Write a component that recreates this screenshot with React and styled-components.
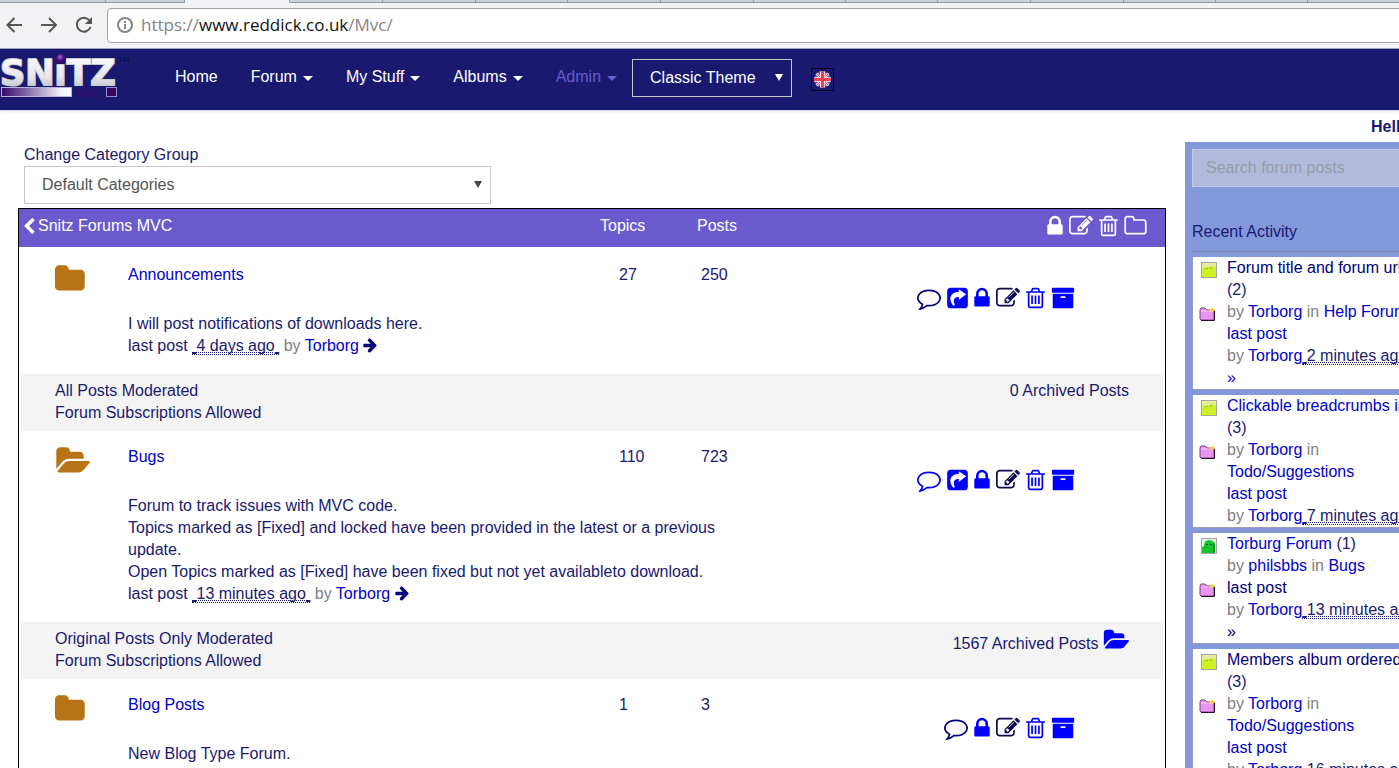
import React from "react";
import styled, { createGlobalStyle } from "styled-components";

const navy = "#191970";
const link = "#0000cd";
const visited = "#00007a";
const bright = "#0000ff";

const GlobalStyle = createGlobalStyle`
  *, *::before, *::after { box-sizing: border-box; }
  html { scrollbar-width: none; }
  body {
    margin: 0;
    background: #fff;
    color: ${navy};
    font: 16px/22px "Liberation Sans", Arial, sans-serif;
  }
`;

/* ---------- icons ---------- */

const Svg = styled.svg`
  display: inline-block;
  flex: none;
  fill: currentColor;
`;

const glyphs = {
  folder: {
    box: "64 0 1792 1792",
    d: "M1728 608v704q0 92-66 158t-158 66h-1216q-92 0-158-66t-66-158v-960q0-92 66-158t158-66h320q92 0 158 66t66 158v32h672q92 0 158 66t66 158z",
  },
  folderOpen: {
    box: "0 0 1943 1792",
    d: "M1943 952q0 31-31 66l-336 396q-43 51-120.5 86.5t-143.5 35.5h-1088q-34 0-60.5-13t-26.5-43q0-31 31-66l336-396q43-51 120.5-86.5t143.5-35.5h1088q34 0 60.5 13t26.5 43zm-343-344v160h-832q-94 0-197 47.5t-164 119.5l-337 396-5 6q0-4-.5-12.5t-.5-12.5v-960q0-92 66-158t158-66h320q92 0 158 66t66 158v32h544q92 0 158 66t66 158z",
  },
  folderOutline: {
    box: "64 0 1664 1792",
    d: "M1600 1312v-704q0-40-28-68t-68-28h-704q-40 0-68-28t-28-68v-64q0-40-28-68t-68-28h-320q-40 0-68 28t-28 68v960q0 40 28 68t68 28h1216q40 0 68-28t28-68zm128-704v704q0 92-66 158t-158 66h-1216q-92 0-158-66t-66-158v-960q0-92 66-158t158-66h320q92 0 158 66t66 158v32h672q92 0 158 66t66 158z",
  },
  lock: {
    box: "320 0 1152 1792",
    d: "M640 768h512v-192q0-106-75-181t-181-75-181 75-75 181v192zm832 96v576q0 40-28 68t-68 28h-960q-40 0-68-28t-28-68v-576q0-40 28-68t68-28h32v-192q0-184 132-316t316-132 316 132 132 316v192h32q40 0 68 28t28 68z",
  },
  edit: {
    box: "0 0 1792 1792",
    d: "M888 1184l116-116-152-152-116 116v56h96v96h56zm440-720q-16-16-33 1l-350 350q-17 17-1 33t33-1l350-350q17-17 1-33zm80 594v190q0 119-84.5 203.5t-203.5 84.5h-832q-119 0-203.5-84.5t-84.5-203.5v-832q0-119 84.5-203.5t203.5-84.5h832q63 0 117 25 15 7 18 23 3 17-9 29l-49 49q-14 14-32 8-23-6-45-6h-832q-66 0-113 47t-47 113v832q0 66 47 113t113 47h832q66 0 113-47t47-113v-126q0-13 9-22l64-64q15-15 35-7t20 29zm-96-738l288 288-672 672h-288v-288zm444 132l-92 92-288-288 92-92q28-28 68-28t68 28l152 152q28 28 28 68t-28 68z",
  },
  trash: {
    box: "192 0 1408 1792",
    d: "M704 736v576q0 14-9 23t-23 9h-64q-14 0-23-9t-9-23v-576q0-14 9-23t23-9h64q14 0 23 9t9 23zm256 0v576q0 14-9 23t-23 9h-64q-14 0-23-9t-9-23v-576q0-14 9-23t23-9h64q14 0 23 9t9 23zm256 0v576q0 14-9 23t-23 9h-64q-14 0-23-9t-9-23v-576q0-14 9-23t23-9h64q14 0 23 9t9 23zm128 724v-948h-896v948q0 22 7 40.5t14.5 27 10.5 8.5h832q3 0 10.5-8.5t14.5-27 7-40.5zm-672-1076h448l-48-117q-7-9-17-11h-317q-10 2-17 11zm928 32v64q0 14-9 23t-23 9h-96v948q0 83-47 143.5t-113 60.5h-832q-66 0-113-58.5t-47-141.5v-952h-96q-14 0-23-9t-9-23v-64q0-14 9-23t23-9h309l70-167q15-37 54-63t79-26h320q40 0 79 26t54 63l70 167h309q14 0 23 9t9 23z",
  },
  archive: {
    box: "0 0 1792 1792",
    d: "M1088 832q0-26-19-45t-45-19h-256q-26 0-45 19t-19 45 19 45 45 19h256q26 0 45-19t19-45zm576-192v960q0 26-19 45t-45 19h-1408q-26 0-45-19t-19-45v-960q0-26 19-45t45-19h1408q26 0 45 19t19 45zm64-448v256q0 26-19 45t-45 19h-1536q-26 0-45-19t-19-45v-256q0-26 19-45t45-19h1536q26 0 45 19t19 45z",
  },
  comment: {
    box: "0 0 1792 1792",
    d: "M896 384q-204 0-381.5 69.5t-282 187.5-104.5 255q0 112 71.5 213.5t201.5 175.5l87 50-27 96q-24 91-70 172 152-63 275-171l43-38 57 6q69 8 130 8 204 0 381.5-69.5t282-187.5 104.5-255-104.5-255-282-187.5-381.5-69.5zm896 512q0 174-120 321.5t-326 233-450 85.5q-70 0-145-8-198 175-460 242-49 14-114 22h-5q-15 0-27-10.5t-16-27.5v-1q-3-4-.5-12t2-10 4.5-9.5l6-9 7-8.5 8-9q7-8 31-34.5t34.5-38 31-39.5 32.5-51 27-59 26-76q-157-89-247.5-220t-90.5-281q0-174 120-321.5t326-233 450-85.5 450 85.5 326 233 120 321.5z",
  },
  share: {
    box: "0 -5 62 72",
    d: "M11 0H51Q62 0 62 11V51Q62 62 51 62H11Q0 62 0 51V11Q0 0 11 0ZM35 5V13C10 12 3 33 16 51C19 56 24 54 22 49C17 34 22 28 35 28V37L57 20Z",
  },
  arrow: {
    box: "100 128 1536 1664",
    d: "M1600 960q0 54-37 91l-651 651q-39 37-91 37-51 0-90-37l-75-75q-38-38-38-91t38-91l293-293h-704q-52 0-84.5-37.5t-32.5-90.5v-128q0-53 32.5-90.5t84.5-37.5h704l-293-294q-38-36-38-90t38-90l75-75q38-38 90-38 53 0 91 38l651 651q37 35 37 90z",
  },
  chevron: {
    box: "410 30 1056 1620",
    d: "M1427 301l-531 531 531 531q19 19 19 45t-19 45l-166 166q-19 19-45 19t-45-19l-742-742q-19-19-19-45t19-45l742-742q19-19 45-19t45 19l166 166q19 19 19 45t-19 45z",
  },
};

function Icon({ name, w, h = 24, className }) {
  return (
    <Svg className={className} width={w} height={h} viewBox={glyphs[name].box} aria-hidden="true">
      <path fillRule="evenodd" d={glyphs[name].d} />
    </Svg>
  );
}

/* ---------- browser bar ---------- */

const TabStrip = styled.div`
  display: flex;
  height: 3px;
  overflow: hidden;
`;
const Tab = styled.div`
  flex: 0 0 ${(p) => p.$w}px;
  background: ${(p) => (p.$active ? "#f2f2f4" : "#cbd3da")};
  border-bottom: 1px solid ${(p) => (p.$active ? "#f2f2f4" : "#939aa1")};
  border-right: 1px solid #939aa1;
`;
const Toolbar = styled.div`
  display: flex;
  align-items: center;
  height: 46px;
  padding: 5px 0 6px 6px;
  background: #f2f2f4;
  border-bottom: 1px solid #9d9dbd;
  overflow: hidden;
`;
const ToolButton = styled.button`
  display: block;
  width: 17px;
  height: 18px;
  margin-right: 18px;
  padding: 0;
  border: 0;
  background: none;
  color: #555;
`;
const Omnibox = styled.div`
  flex: 1;
  display: flex;
  align-items: center;
  gap: 8px;
  height: 35px;
  margin-left: -4px;
  margin-right: -8px;
  padding-left: 9px;
  background: #fff;
  border: 1px solid #a3a3ab;
  border-radius: 4px;
  color: #858585;
  font: 17px/24px "Open Sans", "Noto Sans", sans-serif;
`;
const Host = styled.span`
  color: #111;
`;
const Stroke = styled.svg`
  display: block;
  fill: none;
  stroke: currentColor;
  stroke-width: 2;
`;

/* ---------- site navigation ---------- */

const NavBar = styled.nav`
  display: flex;
  align-items: flex-start;
  height: 61px;
  background: ${navy};
  box-shadow: 0 1px 1px #dcdcf0, 0 2px 3px #f0f0f8;
`;
const LogoLink = styled.a`
  display: block;
  width: 175px;
  height: 61px;
`;
const Menu = styled.ul`
  display: flex;
  gap: 33px;
  margin: 0;
  padding: 17px 0 0;
  list-style: none;
`;
const MenuLink = styled.a`
  display: flex;
  align-items: center;
  color: ${(p) => (p.$dim ? "#6a5acd" : "#fff")};
  text-decoration: none;
  white-space: nowrap;
`;
const Caret = styled.span`
  margin: 2px 0 0 6px;
  border: 5px solid transparent;
  border-top-color: currentColor;
  border-bottom: 0;
`;
const SelectWrap = styled.div`
  position: relative;
  width: ${(p) => p.$w}px;
  max-width: 100%;
  margin: ${(p) => p.$m || 0};
  color: ${(p) => (p.$dark ? "#fff" : "#444")};
`;
const Select = styled.select`
  display: block;
  appearance: none;
  width: 100%;
  height: 38px;
  padding: 0 30px 0 17px;
  border: 1px solid #c8c8c8;
  border-radius: 0;
  background: transparent;
  color: ${(p) => (p.$dark ? "#fff" : "#555")};
  font: inherit;
`;
const SelectArrow = styled.span`
  position: absolute;
  top: 15px;
  right: 9px;
  border: 4px solid transparent;
  border-top: 7px solid currentColor;
  border-bottom: 0;
  pointer-events: none;
`;
const FlagButton = styled.button`
  display: flex;
  align-items: center;
  justify-content: center;
  width: 23px;
  height: 23px;
  margin: 19px 0 0 19px;
  padding: 0;
  border: 1px solid #05051e;
  background: none;
`;

/* ---------- page ---------- */

const Page = styled.div`
  display: flex;
  align-items: flex-start;
  overflow: hidden;
`;
const Main = styled.main`
  flex: 1;
  min-width: 0;
  padding: 34px 19px 0 18px;
`;
const GroupPicker = styled.div`
  padding: 0 6px;
`;
const GroupLabel = styled.label`
  display: block;
`;
const ForumBox = styled.section`
  margin-top: 4px;
  border: 1px solid #000;
`;
const ForumTable = styled.table`
  width: 100%;
  table-layout: fixed;
  border-collapse: separate;
  border-spacing: 0;
`;
const Col = styled.col`
  width: ${(p) => p.$w}px;
`;
const HeadCell = styled.th`
  height: 40px;
  padding: 0 ${(p) => p.$right || 0}px 4px ${(p) => p.$left || 0}px;
  border-bottom: 2px solid #fff;
  background: #6a5acd;
  color: #fff;
  font-weight: normal;
  text-align: left;
`;
const CategoryName = styled.a`
  display: flex;
  align-items: center;
  gap: 3px;
  color: #fff;
  text-decoration: none;
`;
const Cell = styled.td`
  padding: 15px 0 0 ${(p) => p.$left || 0}px;
  vertical-align: top;
`;
const IconCell = styled(Cell)`
  padding: 14px 0 0 36px;
  color: #b87414;
  svg { display: block; }
`;
const NameCell = styled(Cell)`
  height: 37px;
`;
const TextCell = styled(Cell)`
  padding: 27px 0 17px;
`;
const ActionCell = styled(Cell)`
  padding: 37px 90px 0 0;
`;
const FootCell = styled.td`
  height: 57px;
  padding: 6px 0 7px 34px;
  border-left: 2px solid #fff;
  background: #f4f4f4;
  vertical-align: top;
`;
const FootCellRight = styled(FootCell)`
  padding: 6px 34px 0 0;
  border-left: 0;
  border-right: 2px solid #fff;
  text-align: right;
`;
const Actions = styled.div`
  display: flex;
  justify-content: flex-end;
  gap: 6px;
`;
const IconButton = styled.button`
  display: block;
  padding: 0;
  border: 0;
  background: none;
  color: ${(p) => p.$color};
  svg { display: block; }
`;
const A = styled.a`
  color: ${(p) => (p.$seen ? visited : link)};
  text-decoration: none;
`;
const ArchiveLink = styled.a`
  color: ${bright};
  svg { vertical-align: -3px; }
`;
const GoLink = styled.a`
  color: #000080;
  svg { vertical-align: -2px; }
`;
const Muted = styled.span`
  color: #808080;
`;
const Stamp = styled.abbr`
  border-bottom: 1px dotted ${navy};
  text-decoration: none;
  white-space: pre;
`;
const StampEdge = styled.span`
  text-decoration: underline solid 2px;
`;
const StampText = styled.span`
  text-decoration: underline dotted 1px;
  text-decoration-skip-ink: none;
`;

/* ---------- sidebar ---------- */

const Sidebar = styled.aside`
  flex: 0 0 214px;
  overflow: hidden;
  white-space: nowrap;
`;
const Greeting = styled.div`
  padding: 6px 0 4px 186px;
  font-weight: bold;
`;
const Panel = styled.div`
  padding: 7px 0 0 7px;
  background: #8298db;
`;
const PanelBody = styled.div`
  width: 260px;
`;
const SearchInput = styled.input`
  display: block;
  width: 100%;
  height: 38px;
  padding: 0 13px;
  border: 1px solid #c4cbe2;
  border-radius: 0;
  background: #afbadc;
  color: ${navy};
  font: inherit;
  &::placeholder { color: #979aa8; opacity: 1; }
`;
const PanelTitle = styled.h2`
  margin: 34px 0 5px;
  padding-bottom: 8px;
  border-bottom: 1px solid #7c83a5;
  font: inherit;
`;
const Feed = styled.div`
  display: flex;
  flex-direction: column;
  gap: 6px;
`;
const Card = styled.article`
  display: flex;
  background: #fff;
  box-shadow: 0 1px 0 #9a9eb4, -1px 0 0 #9a9eb4;
  margin-left: 1px;
`;
const CardIcons = styled.div`
  display: flex;
  flex-direction: column;
  gap: 27px;
  width: 34px;
  padding: 5px 0 0 6px;
`;
const CardText = styled.div``;

function Avatar({ ghost }) {
  return (
    <svg width="19" height="17" viewBox="-2 0 19 17" aria-hidden="true">
      <rect x="0.5" y="0.5" width="15" height="15" fill={ghost ? "#e4f6e4" : "#cdf02a"} stroke="#a3a3a3" />
      {ghost ? (
        <g>
          <path d="M1 15V9L3 8Q3 2 8 2Q14 2 14 8V15Z" fill="#16c52c" />
          <path d="M5 6h2v1H5zM9 6h2v1H9z" fill="#053d10" />
          <path d="M12 4Q15 7 14 15H12Z" fill="#0a8f20" />
        </g>
      ) : (
        <g>
          <path d="M1 1H15V5L11 4L7 6L2 5L1 8Z" fill="#e6ee9e" />
          <path d="M4 7L7 6M8 6h3" stroke="#97b81a" fill="none" />
          <path d="M2 11l3 3h6l3-3v4H2z" fill="#d8f60a" />
        </g>
      )}
    </svg>
  );
}

function TopicFolder() {
  return (
    <svg width="17" height="16" viewBox="0 0 17 16" aria-hidden="true">
      <path d="M1 4L2 2H6L8 4H15V14H2L1 13Z" fill="#e795f0" stroke="#7d3b86" />
      <path d="M2 5H13" stroke="#f7c9fb" />
      <path d="M15.500 5V14.500H2" stroke="#2a102e" fill="none" />
      <path d="M13 1l1 2 2 1-2 1-1 2-1-2-2-1 2-1z" fill="#ffd42a" />
    </svg>
  );
}

function Logo() {
  return (
    <svg width="132" height="56" viewBox="0 0 132 56" role="img" aria-label="Snitz MVC">
      <defs>
        <linearGradient id="chrome" x1="0" y1="0" x2="0" y2="1">
          <stop offset="0" stopColor="#ffffff" />
          <stop offset="0.6" stopColor="#e6e6ec" />
          <stop offset="1" stopColor="#b4b4c2" />
        </linearGradient>
        <linearGradient id="bar" x1="0" y1="0" x2="1" y2="0">
          <stop offset="0" stopColor="#35066a" />
          <stop offset="0.85" stopColor="#f3f0fa" />
          <stop offset="1" stopColor="#ffffff" />
        </linearGradient>
        <radialGradient id="ball" cx="0.4" cy="0.3" r="0.7">
          <stop offset="0" stopColor="#a06ad0" />
          <stop offset="0.5" stopColor="#4a0f86" />
          <stop offset="1" stopColor="#2b0657" />
        </radialGradient>
      </defs>
      <text x="0" y="36" fontFamily="DejaVu Sans, sans-serif" fontWeight="bold" fontSize="35" fill="url(#chrome)" stroke="#c9c9d4" strokeWidth="2" strokeLinejoin="round" paintOrder="stroke">SNıTZ</text>
      <circle cx="61" cy="10" r="5" fill="url(#ball)" />
      <text x="118" y="13" fontFamily="Liberation Sans, sans-serif" fontSize="8" fill="#0c0c3c">TM</text>
      <rect x="1.500" y="38.500" width="70" height="9" fill="url(#bar)" stroke="#b9b0dc" />
      <text x="76" y="48" fontFamily="Liberation Sans, sans-serif" fontWeight="bold" fontSize="10" fill="#3c0a6e">MVC</text>
      <rect x="106.500" y="38.500" width="10" height="9" fill="#39065f" stroke="#9a8cc8" />
    </svg>
  );
}

function Flag() {
  return (
    <svg width="17" height="17" viewBox="0 0 17 17" aria-hidden="true">
      <clipPath id="disc"><circle cx="8.500" cy="8.500" r="8.500" /></clipPath>
      <g clipPath="url(#disc)">
        <rect width="17" height="17" fill="#3d5cb8" />
        <path d="M1 1L16 16M16 1L1 16" stroke="#e6c8dc" strokeWidth="3" />
        <path d="M1 1L16 16M16 1L1 16" stroke="#ec5060" strokeWidth="1" />
        <path d="M8.500 0V17M0 8.500H17" stroke="#f4d4dc" strokeWidth="5" />
        <path d="M8.500 0V17M0 8.500H17" stroke="#f04050" strokeWidth="3" />
      </g>
    </svg>
  );
}

function When({ children }) {
  return (
    <Stamp>
      <StampEdge> </StampEdge>
      <StampText>{children}</StampText>
      <StampEdge> </StampEdge>
    </Stamp>
  );
}

const widths = { comment: 24, share: 21, lock: 16, edit: 24, trash: 19, archive: 24, folderOutline: 23 };

function ActionBar({ items }) {
  return (
    <Actions>
      {items.map(([name, label, color]) => (
        <IconButton key={name} type="button" aria-label={label} $color={color}>
          <Icon name={name} w={widths[name]} />
        </IconButton>
      ))}
    </Actions>
  );
}

const headActions = [
  ["lock", "Lock category", "#fff"],
  ["edit", "Edit category", "#fff"],
  ["trash", "Delete category", "#fff"],
  ["folderOutline", "New forum", "#fff"],
];
const commonActions = [
  ["lock", "Lock forum", bright],
  ["edit", "Edit forum", "#0a0a50"],
  ["trash", "Delete forum", bright],
  ["archive", "Archive forum", bright],
];

const forums = [
  {
    name: "Announcements", topics: 27, posts: 250, icon: "folder",
    lines: ["I will post notifications of downloads here."],
    when: "4 days ago",
    actions: [["comment", "New topic", "#000080"], ["share", "Share forum", bright], ...commonActions],
    policy: "All Posts Moderated", archived: "0 Archived Posts",
  },
  {
    name: "Bugs", topics: 110, posts: 723, icon: "folderOpen",
    lines: [
      "Forum to track issues with MVC code.",
      "Topics marked as [Fixed] and locked have been provided in the latest or a previous update.",
      "Open Topics marked as [Fixed] have been fixed but not yet availableto download.",
    ],
    when: "13 minutes ago",
    actions: [["comment", "New topic", bright], ["share", "Share forum", bright], ...commonActions],
    policy: "Original Posts Only Moderated", archived: "1567 Archived Posts", archiveLink: true,
  },
  {
    name: "Blog Posts", topics: 1, posts: 3, icon: "folder",
    lines: ["New Blog Type Forum."],
    actions: [["comment", "New topic", "#000080"], ...commonActions],
  },
];

function ForumRows({ forum }) {
  return (
    <tbody>
      <tr>
        <IconCell rowSpan={2}>
          <Icon name={forum.icon} w={forum.icon === "folder" ? 32 : 35} h={32} />
        </IconCell>
        <NameCell><A href="#forum">{forum.name}</A></NameCell>
        <Cell $left={19}>{forum.topics}</Cell>
        <Cell $left={4}>{forum.posts}</Cell>
        <ActionCell rowSpan={2}><ActionBar items={forum.actions} /></ActionCell>
      </tr>
      <tr>
        <TextCell colSpan={3}>
          {forum.lines.map((line) => <div key={line}>{line}</div>)}
          {forum.when && (
            <div>
              last post <When>{forum.when}</When> <Muted>by</Muted> <A href="#member">Torborg</A>{" "}
              <GoLink href="#last" aria-label="Go to last post"><Icon name="arrow" w={14} h={15} /></GoLink>
            </div>
          )}
        </TextCell>
      </tr>
      {forum.policy && (
        <tr>
          <FootCell colSpan={4}>
            {forum.policy}<br />Forum Subscriptions Allowed
          </FootCell>
          <FootCellRight>
            {forum.archived}
            {forum.archiveLink && (
              <>
                {" "}
                <ArchiveLink href="#archive" aria-label="Open archive"><Icon name="folderOpen" w={26} /></ArchiveLink>
              </>
            )}
          </FootCellRight>
        </tr>
      )}
    </tbody>
  );
}

const activity = [
  { title: "Forum title and forum url", seen: true, count: 2, wrap: true, by: "Torborg", forum: "Help Forum", when: "2 minutes ago", more: true },
  { title: "Clickable breadcrumbs in", count: 3, wrap: true, by: "Torborg", forum: "Todo/Suggestions", forumWrap: true, when: "7 minutes ago" },
  { title: "Torburg Forum", count: 1, by: "philsbbs", forum: "Bugs", when: "13 minutes ago", more: true, ghost: true, lastSeen: true },
  { title: "Members album ordered", seen: true, count: 3, wrap: true, by: "Torborg", forum: "Todo/Suggestions", forumWrap: true, when: "16 minutes ago" },
];

function ActivityCard({ item }) {
  return (
    <Card>
      <CardIcons>
        <Avatar ghost={item.ghost} />
        <TopicFolder />
      </CardIcons>
      <CardText>
        <A href="#topic" $seen={item.seen}>{item.title}</A>{item.wrap ? <br /> : " "}({item.count})
        <div>
          <Muted>by</Muted> <A href="#member">{item.by}</A> <Muted>in</Muted>
          {item.forumWrap ? <br /> : " "}
          <A href="#forum">{item.forum}</A>
        </div>
        <div><A href="#last" $seen={item.lastSeen}>last post</A></div>
        <div><Muted>by</Muted> <A href="#member">Torborg</A><When>{item.when}</When></div>
        {item.more && <div><A href="#more" $seen={item.lastSeen}>»</A></div>}
      </CardText>
    </Card>
  );
}

const tabs = [106, 79, 105, 93, 93, 92, 93, 93, 92, 92, 93, 93, 92, 92, 93];
const menu = ["Home", "Forum", "My Stuff", "Albums", "Admin"];

export default function App() {
  return (
    <>
      <GlobalStyle />
      <TabStrip>
        {tabs.map((w, i) => <Tab key={i} $w={w} $active={i === 2} />)}
      </TabStrip>
      <Toolbar>
        <ToolButton type="button" aria-label="Back">
          <Stroke width="17" height="18" viewBox="0 0 17 18"><path d="M16 9H1.500M8.500 2L1.500 9L8.500 16" /></Stroke>
        </ToolButton>
        <ToolButton type="button" aria-label="Forward">
          <Stroke width="17" height="18" viewBox="0 0 17 18"><path d="M0 9H15M8 2L15 9L8 16" /></Stroke>
        </ToolButton>
        <ToolButton type="button" aria-label="Reload">
          <Stroke width="17" height="18" viewBox="0 0 17 18">
            <path d="M13.500 4.500A7 7 0 1 0 14.500 11" />
            <path d="M16 1V8H9Z" fill="currentColor" stroke="none" />
          </Stroke>
        </ToolButton>
        <Omnibox>
          <Stroke width="16" height="18" viewBox="0 0 16 18">
            <circle cx="8" cy="9" r="7" /><path d="M8 8V13M8 5V7" />
          </Stroke>
          <span>https://<Host>www.reddick.co.uk</Host>/Mvc/</span>
        </Omnibox>
      </Toolbar>

      <NavBar>
        <LogoLink href="#home"><Logo /></LogoLink>
        <Menu>
          {menu.map((item, i) => (
            <li key={item}>
              <MenuLink href="#menu" $dim={item === "Admin"}>{item}{i > 0 && <Caret />}</MenuLink>
            </li>
          ))}
        </Menu>
        <SelectWrap $w={160} $m="10px 0 0 15px" $dark>
          <Select $dark aria-label="Theme"><option>Classic Theme</option></Select>
          <SelectArrow />
        </SelectWrap>
        <FlagButton type="button" aria-label="English"><Flag /></FlagButton>
      </NavBar>

      <Page>
        <Main>
          <GroupPicker>
            <GroupLabel htmlFor="group">Change Category Group</GroupLabel>
            <SelectWrap $w={467}>
              <Select id="group"><option>Default Categories</option></Select>
              <SelectArrow />
            </SelectWrap>
          </GroupPicker>
          <ForumBox>
            <ForumTable>
              <colgroup>
                <Col $w={109} /><col /><Col $w={97} /><Col $w={53} /><Col $w={415} />
              </colgroup>
              <thead>
                <tr>
                  <HeadCell colSpan={2} $left={5}>
                    <CategoryName href="#category"><Icon name="chevron" w={11} h={16} />Snitz Forums MVC</CategoryName>
                  </HeadCell>
                  <HeadCell>Topics</HeadCell>
                  <HeadCell>Posts</HeadCell>
                  <HeadCell $right={18}><ActionBar items={headActions} /></HeadCell>
                </tr>
              </thead>
              {forums.map((forum) => <ForumRows key={forum.name} forum={forum} />)}
            </ForumTable>
          </ForumBox>
        </Main>
        <Sidebar>
          <Greeting>Hello</Greeting>
          <Panel>
            <PanelBody>
              <SearchInput type="search" aria-label="Search forum posts" placeholder="Search forum posts" />
              <PanelTitle>Recent Activity</PanelTitle>
              <Feed>
                {activity.map((item) => <ActivityCard key={item.title} item={item} />)}
              </Feed>
            </PanelBody>
          </Panel>
        </Sidebar>
      </Page>
    </>
  );
}
